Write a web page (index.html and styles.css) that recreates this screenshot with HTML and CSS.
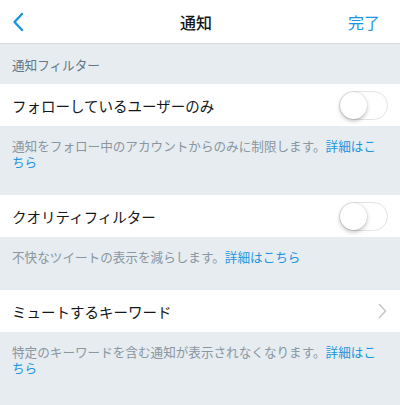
FILE: index.html
```html
<!DOCTYPE html>
<html lang="ja">
<head>
<meta charset="utf-8">
<link rel="stylesheet" href="styles.css">
</head>
<body>
<header class="nav">
  <span class="nav-back">
    <svg width="12" height="20" viewBox="0 0 12 20"><path d="M10 2 L2.5 10 L10 18" fill="none" stroke="#1b95e0" stroke-width="2.4" stroke-linecap="round" stroke-linejoin="round"/></svg>
  </span>
  <span class="nav-title">通知</span>
  <span class="nav-done">完了</span>
</header>
<div class="section-head">通知フィルター</div>
<div class="row">
  <span class="row-title">フォローしているユーザーのみ</span>
  <span class="switch"><span class="knob"></span></span>
</div>
<div class="footer">通知をフォロー中のアカウントからのみに制限します。<span class="link">詳細はこちら</span></div>
<div class="row">
  <span class="row-title">クオリティフィルター</span>
  <span class="switch"><span class="knob"></span></span>
</div>
<div class="footer">不快なツイートの表示を減らします。<span class="link">詳細はこちら</span></div>
<div class="row">
  <span class="row-title">ミュートするキーワード</span>
  <svg class="chev" width="9" height="16" viewBox="0 0 9 16"><path d="M1.5 1.5 L7.5 8 L1.5 14.5" fill="none" stroke="#c7c7cc" stroke-width="1.6" stroke-linecap="round" stroke-linejoin="round"/></svg>
</div>
<div class="footer last">特定のキーワードを含む通知が表示されなくなります。<span class="link">詳細はこちら</span></div>
</body>
</html>
```
FILE: styles.css
```css
html, body {
  margin: 0;
  padding: 0;
}
body {
  width: 400px;
  height: 405px;
  overflow: hidden;
  background: #e6ecf0;
  font-family: "Noto Sans CJK JP", "Noto Sans", sans-serif;
  color: #14171a;
}
.nav {
  height: 43px;
  background: #fff;
  border-bottom: 1px solid #d5dbe0;
  display: flex;
  align-items: center;
  justify-content: space-between;
  padding: 0 20px 0 12px;
}
.nav-back {
  display: flex;
  align-items: center;
  width: 40px;
}
.nav-title {
  font-size: 16px;
  font-weight: 500;
}
.nav-done {
  width: 40px;
  text-align: right;
  font-size: 16px;
  color: #1b95e0;
}
.section-head {
  height: 40px;
  display: flex;
  align-items: center;
  padding: 0 12px;
  font-size: 12.6px;
  color: #657786;
}
.row {
  height: 42px;
  background: #fff;
  display: flex;
  align-items: center;
  justify-content: space-between;
  padding: 0 12px;
}
.row-title {
  font-size: 14.5px;
}
.switch {
  width: 47px;
  height: 27px;
  border: 1px solid #e3e3e3;
  border-radius: 15px;
  background: #fff;
  position: relative;
}
.knob {
  position: absolute;
  left: 0;
  top: 0;
  width: 27px;
  height: 27px;
  border-radius: 50%;
  background: #fff;
  box-shadow: 0 2px 4px rgba(0,0,0,0.25), 0 0 1px rgba(0,0,0,0.2);
}
.chev {
  margin-right: 1px;
}
.footer {
  padding: 12px 12px 25px;
  font-size: 12.6px;
  line-height: 16px;
  color: #8a96a0;
}
.footer.last {
  padding-bottom: 40px;
}
.link {
  color: #1b95e0;
}
```
